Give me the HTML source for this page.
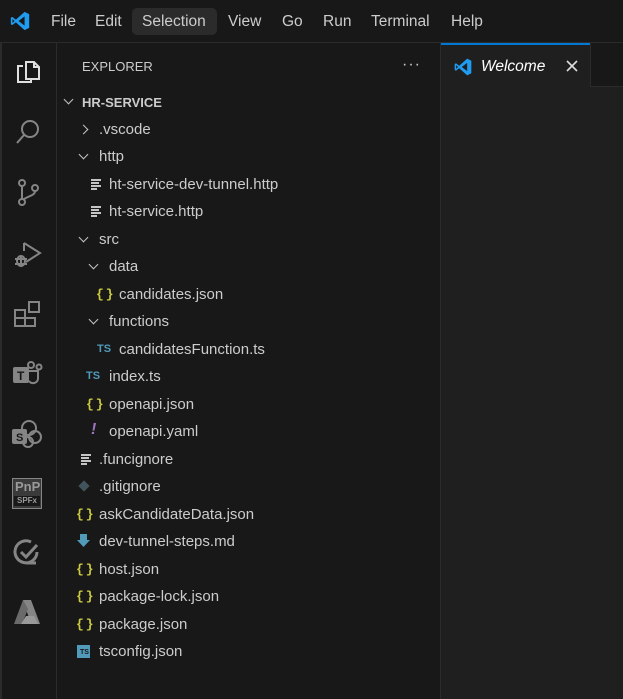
<!DOCTYPE html>
<html><head><meta charset="utf-8"><style>
*{margin:0;padding:0;box-sizing:border-box}
body{width:623px;height:699px;background:#181818;font-family:"Liberation Sans",sans-serif;color:#ccc;position:relative;overflow:hidden}
.abs{position:absolute}
.menu{position:absolute;top:13px;font-size:15.5px;color:#ccc}
.row{position:absolute;font-size:15px;color:#ccc;white-space:nowrap;line-height:18px;margin-top:1px}
.chev{position:absolute;width:7px;height:7px;border-right:1.5px solid #c5c5c5;border-bottom:1.5px solid #c5c5c5}
.down{transform:rotate(45deg)}
.right{transform:rotate(-45deg)}
.br{position:absolute;font-size:13px;font-weight:bold;color:#cbcb41;letter-spacing:2px;font-family:"Liberation Mono",monospace}
.ts{position:absolute;font-size:11px;font-weight:bold;color:#519aba}
.lines{position:absolute;width:10px;height:10px}
.lines i{display:block;height:2px;background:#c5c5c5;margin-bottom:1px}
svg.ic{position:absolute}
</style></head><body>
<svg class="abs" style="left:9px;top:10px" width="22" height="22" viewBox="0 0 24 24"><path d="M17 2 L22 4.5 V19.5 L17 22 L7.5 13.5 L3.5 16.5 L2 15.5 V8.5 L3.5 7.5 L7.5 10.5 Z M17 7 L10.5 12 L17 17 Z M3.8 9.8 V14.2 L6 12 Z" fill="#1f9cf0" fill-rule="evenodd"/></svg>
<div class="menu" style="left:51px">File</div>
<div class="menu" style="left:95px">Edit</div>
<div class="abs" style="left:132px;top:8px;width:85px;height:27px;background:#2b2b2b;border-radius:5px"></div>
<div class="menu" style="left:142px">Selection</div>
<div class="menu" style="left:228px">View</div>
<div class="menu" style="left:282px">Go</div>
<div class="menu" style="left:323px">Run</div>
<div class="menu" style="left:371px">Terminal</div>
<div class="menu" style="left:451px">Help</div>
<div class="abs" style="left:0;top:42px;width:623px;height:1px;background:#2b2b2b"></div>
<div class="abs" style="left:56px;top:43px;width:1px;height:656px;background:#2b2b2b"></div>
<div class="abs" style="left:0;top:43px;width:2px;height:656px;background:#2b2b2b"></div>
<div class="abs" style="left:440px;top:43px;width:1px;height:656px;background:#2b2b2b"></div>
<div class="abs" style="left:441px;top:43px;width:149px;height:44px;background:#1f1f1f;border-top:2px solid #0078d4"></div>
<div class="abs" style="left:590px;top:43px;width:1px;height:44px;background:#2b2b2b"></div>
<div class="abs" style="left:591px;top:86px;width:32px;height:1px;background:#2b2b2b"></div>
<div class="abs" style="left:441px;top:87px;width:182px;height:612px;background:#1f1f1f"></div>
<svg class="abs" style="left:453px;top:57px" width="20" height="20" viewBox="0 0 24 24"><path d="M17 2 L22 4.5 V19.5 L17 22 L7.5 13.5 L3.5 16.5 L2 15.5 V8.5 L3.5 7.5 L7.5 10.5 Z M17 7 L10.5 12 L17 17 Z M3.8 9.8 V14.2 L6 12 Z" fill="#1f9cf0" fill-rule="evenodd"/></svg>
<div class="abs" style="left:481px;top:58px;font-size:15.5px;font-style:italic;color:#fff">Welcome</div>
<svg class="abs" style="left:566px;top:60px" width="12" height="12" viewBox="0 0 12 12"><path d="M1 1L11 11M11 1L1 11" stroke="#ddd" stroke-width="1.6"/></svg>
<svg class="ic" style="left:14px;top:58px" width="28" height="28" viewBox="0 0 28 28" fill="none" stroke="#e0e0e0" stroke-width="2"><path d="M12 4h8l5 5v12h-13z"/><path d="M9 8H4v16h13v-3"/><path d="M20 4v5h5"/></svg>
<svg class="ic" style="left:14px;top:118px" width="28" height="28" viewBox="0 0 28 28" fill="none" stroke="#858585" stroke-width="2"><circle cx="16" cy="11" r="8"/><path d="M10 17L3 25"/></svg>
<svg class="ic" style="left:14px;top:178px" width="28" height="28" viewBox="0 0 28 28" fill="none" stroke="#858585" stroke-width="2"><circle cx="8" cy="5" r="3"/><circle cx="8" cy="24" r="3"/><circle cx="21" cy="10" r="3"/><path d="M8 8v13M21 13c0 5-8 5-12 9"/></svg>
<svg class="ic" style="left:12px;top:240px" width="30" height="30" viewBox="0 0 30 30" fill="none" stroke="#858585" stroke-width="2"><path d="M12 3l16 10-14 9"/><path d="M12 3v8"/><ellipse cx="9" cy="21" rx="4" ry="5"/><path d="M3 19h12M3 24h12M9 16v10"/></svg>
<svg class="ic" style="left:12px;top:299px" width="30" height="30" viewBox="0 0 30 30" fill="none" stroke="#858585" stroke-width="2"><path d="M3 11h10v16H3zM3 19h20v8H13"/><rect x="17" y="3" width="10" height="10"/></svg>
<svg class="ic" style="left:11px;top:359px" width="32" height="32" viewBox="0 0 32 32"><rect x="2" y="8" width="16" height="16" rx="2" fill="#858585"/><text x="6" y="21" font-size="12" font-weight="bold" fill="#181818" font-family="Liberation Sans">T</text><circle cx="20" cy="6" r="3" fill="none" stroke="#858585" stroke-width="2"/><circle cx="28" cy="8" r="2.5" fill="none" stroke="#858585" stroke-width="2"/><path d="M18 12h9v8a5 5 0 0 1-9 2" fill="none" stroke="#858585" stroke-width="2"/></svg>
<svg class="ic" style="left:11px;top:418px" width="32" height="32" viewBox="0 0 32 32" fill="none" stroke="#858585" stroke-width="2"><circle cx="18" cy="10" r="7"/><circle cx="24" cy="19" r="6"/><circle cx="17" cy="24" r="5"/><rect x="2" y="12" width="13" height="13" rx="1" fill="#858585"/><text x="5" y="23" font-size="11" font-weight="bold" fill="#181818" stroke="none" font-family="Liberation Sans">S</text></svg>
<div class="abs" style="left:12px;top:478px;width:30px;height:31px;background:#3a3a3a;border:1.5px solid #858585;"></div>
<div class="abs" style="left:15px;top:479px;font-size:13px;font-weight:bold;color:#9a9a9a">PnP</div>
<div class="abs" style="left:14px;top:496px;width:26px;height:10px;background:#181818"></div>
<div class="abs" style="left:17px;top:496px;font-size:8px;font-weight:bold;color:#9a9a9a">SPFx</div>
<svg class="ic" style="left:12px;top:538px" width="30" height="30" viewBox="0 0 30 30" fill="none" stroke="#858585" stroke-width="3"><path d="M25 14a11 11 0 1 1-6-10"/><path d="M9 14l5 5 11-12"/><path d="M14 25h10"/></svg>
<svg class="ic" style="left:12px;top:598px" width="30" height="28" viewBox="0 0 30 28"><path d="M11 2h8l9 24h-9z" fill="#858585"/><path d="M11 2L2 26h8l6-15z" fill="#6a6a6a"/><path d="M14 18h8l4 8H9z" fill="#999"/></svg>
<div class="abs" style="left:82px;top:59px;font-size:13px;color:#ccc">EXPLORER</div>
<div class="abs" style="left:402px;top:56px;font-size:16px;color:#ccc;letter-spacing:1px">···</div>
<div class="chev down" style="left:65px;top:96px"></div>
<div class="row" style="left:82px;top:93px;font-weight:bold;font-size:13px">HR-SERVICE</div>

<div class="chev right" style="left:80px;top:126px"></div><div class="row" style="left:99px;top:120px">.vscode</div>
<div class="chev down" style="left:80px;top:151px"></div><div class="row" style="left:99px;top:147px">http</div>
<div class="lines" style="left:91px;top:179px"><i></i><i style="width:8px"></i><i></i><i style="width:6px"></i></div><div class="row" style="left:109px;top:175px">ht-service-dev-tunnel.http</div>
<div class="lines" style="left:91px;top:206px"><i></i><i style="width:8px"></i><i></i><i style="width:6px"></i></div><div class="row" style="left:109px;top:202px">ht-service.http</div>
<div class="chev down" style="left:80px;top:234px"></div><div class="row" style="left:99px;top:230px">src</div>
<div class="chev down" style="left:90px;top:261px"></div><div class="row" style="left:109px;top:257px">data</div>
<div class="br" style="left:96px;top:287px">{}</div><div class="row" style="left:119px;top:285px">candidates.json</div>
<div class="chev down" style="left:90px;top:316px"></div><div class="row" style="left:109px;top:312px">functions</div>
<div class="ts" style="left:97px;top:343px">TS</div><div class="row" style="left:119px;top:340px">candidatesFunction.ts</div>
<div class="ts" style="left:86px;top:370px">TS</div><div class="row" style="left:109px;top:367px">index.ts</div>
<div class="br" style="left:86px;top:397px">{}</div><div class="row" style="left:109px;top:395px">openapi.json</div>
<div class="abs" style="left:91px;top:421px;font-size:16px;font-style:italic;font-weight:bold;color:#a074c4">!</div><div class="row" style="left:109px;top:422px">openapi.yaml</div>
<div class="lines" style="left:81px;top:454px"><i></i><i style="width:8px"></i><i></i><i style="width:6px"></i></div><div class="row" style="left:99px;top:450px">.funcignore</div>
<div class="abs" style="left:80px;top:482px;width:8px;height:8px;background:#41535b;transform:rotate(45deg)"></div><div class="row" style="left:99px;top:477px">.gitignore</div>
<div class="br" style="left:76px;top:507px">{}</div><div class="row" style="left:99px;top:505px">askCandidateData.json</div>
<svg class="ic" style="left:77px;top:534px" width="13" height="13" viewBox="0 0 13 13"><path d="M3 0h7v6h3L6.5 13 0 6h3z" fill="#519aba"/></svg><div class="row" style="left:99px;top:532px">dev-tunnel-steps.md</div>
<div class="br" style="left:76px;top:562px">{}</div><div class="row" style="left:99px;top:560px">host.json</div>
<div class="br" style="left:76px;top:589px">{}</div><div class="row" style="left:99px;top:587px">package-lock.json</div>
<div class="br" style="left:76px;top:617px">{}</div><div class="row" style="left:99px;top:615px">package.json</div>
<div class="abs" style="left:77px;top:645px;width:13px;height:13px;background:#519aba;font-size:7px;color:#181818;font-weight:bold;padding:4px 0 0 3px;line-height:8px">TS</div><div class="row" style="left:99px;top:642px">tsconfig.json</div>
</body></html>
